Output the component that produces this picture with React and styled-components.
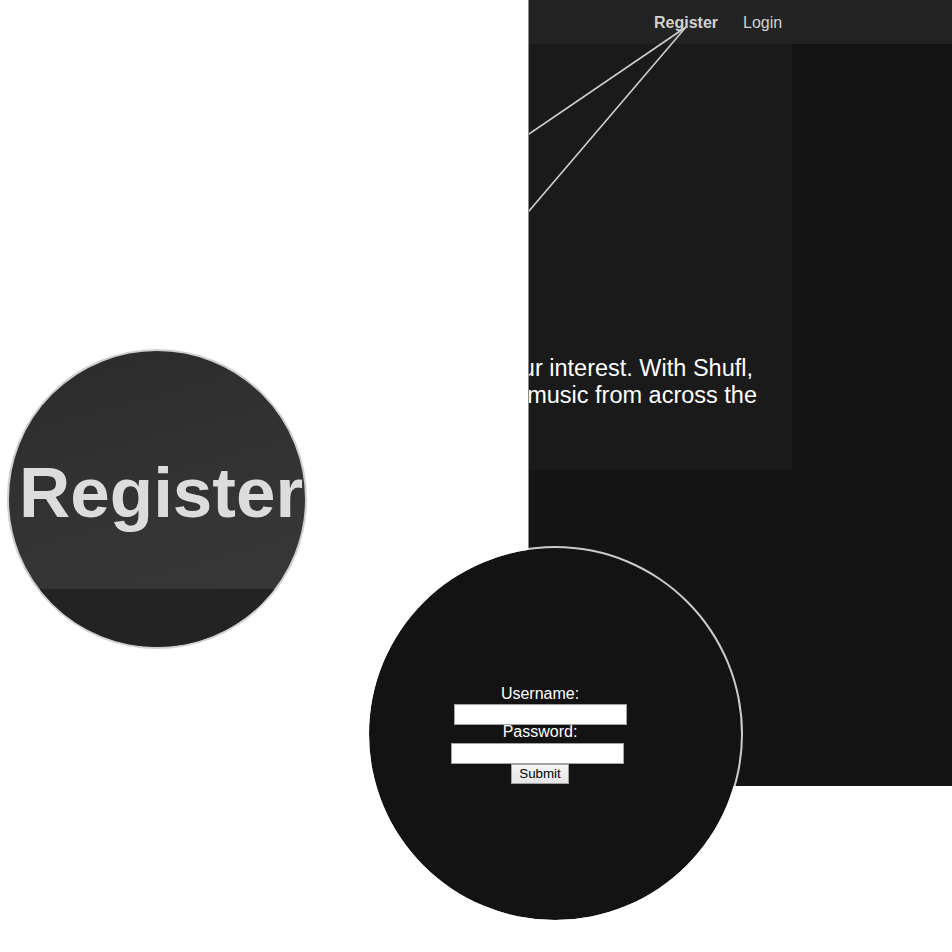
import React from "react";
import styled, { createGlobalStyle } from "styled-components";

const GlobalStyle = createGlobalStyle`
  html, body {
    margin: 0;
    padding: 0;
    background: #fff;
  }
  body {
    font-family: "Liberation Sans", Arial, sans-serif;
  }
`;

const Stage = styled.div`
  position: relative;
  width: 952px;
  height: 952px;
  overflow: hidden;
  background: #fff;
`;

const Page = styled.div`
  position: relative;
  margin-left: 528px;
  width: 424px;
  height: 786px;
  box-sizing: border-box;
  border-left: 1px solid #8a8a8a;
  background: #141414;
  overflow: hidden;
  display: flex;
  flex-direction: column;
`;

const NavBar = styled.nav`
  flex: none;
  height: 44px;
  box-sizing: border-box;
  padding: 2px 0 0 125px;
  background: #232323;
  display: flex;
  align-items: center;
  gap: 25px;
  font-size: 16px;
`;

const NavLink = styled.a`
  color: #d2d2d2;
  font-weight: ${props => (props.$active ? 700 : 400)};
  text-decoration: none;
  cursor: pointer;
`;

const Content = styled.div`
  flex: 1;
  display: flex;
  align-items: flex-start;
`;

const Panel = styled.section`
  width: 263px;
  height: 426px;
  box-sizing: border-box;
  background: #1a1a1a;
  padding: 0 35px 60px 0;
  display: flex;
  flex-direction: column;
  justify-content: flex-end;
`;

const Intro = styled.div`
  display: flex;
  flex-direction: column;
  align-items: flex-end;
  font-size: 23.5px;
  line-height: 27.6px;
  color: #fff;
`;

const IntroLine = styled.span`
  white-space: nowrap;
  margin-right: ${props => props.$trim || 0}px;
`;

const Pointer = styled.svg`
  position: absolute;
  inset: 0;
  width: 100%;
  height: 100%;
  pointer-events: none;
`;

const Lens = styled.div`
  position: absolute;
  left: 7px;
  top: 349px;
  width: 300px;
  height: 300px;
  box-sizing: border-box;
  border-radius: 50%;
  border: 2px solid #cfcfcf;
  overflow: hidden;
  background: linear-gradient(165deg, #2b2b2b 0%, #353535 60%, #383838 100%);
  display: flex;
  flex-direction: column;
`;

const LensText = styled.div`
  flex: 1;
  padding: 106px 0 0 10px;
  font-size: 71px;
  line-height: 71px;
  font-weight: 700;
  color: #dcdcdc;
  white-space: nowrap;
`;

const LensBar = styled.div`
  flex: none;
  height: 58px;
  background: #232323;
`;

const LoginDisc = styled.div`
  position: absolute;
  left: 367px;
  top: 546px;
  width: 376px;
  height: 376px;
  box-sizing: border-box;
  border-radius: 50%;
  border: 2px solid rgba(255, 255, 255, 0.78);
  background: #131313;
  background-clip: padding-box;
  display: flex;
  align-items: center;
  justify-content: center;
`;

const LoginForm = styled.form`
  display: flex;
  flex-direction: column;
  align-items: center;
  padding: 0 30px 0 0;
  margin: 0;
`;

const Label = styled.label`
  display: block;
  color: #fff;
  font-size: 16px;
  line-height: 18px;
  margin-top: ${props => props.$mt || 0}px;
`;

const Field = styled.input`
  width: 173px;
  height: 21px;
  box-sizing: border-box;
  border: 1px solid #a3a3a3;
  background: #fff;
  padding: 1px 2px;
  font-size: 13.33px;
  font-family: "Liberation Sans", Arial, sans-serif;
  outline: none;
  margin-top: ${props => props.$mt || 0}px;
  margin-left: ${props => (props.$shift > 0 ? props.$shift * 2 : 0)}px;
  margin-right: ${props => (props.$shift < 0 ? -props.$shift * 2 : 0)}px;
`;

const SubmitButton = styled.button`
  width: 58px;
  height: 20px;
  box-sizing: border-box;
  padding: 0;
  border: 1px solid #a0a0a0;
  background: linear-gradient(#f5f5f5, #e6e6e6);
  color: #000;
  font-size: 13.33px;
  font-family: "Liberation Sans", Arial, sans-serif;
  line-height: 18px;
`;

const App = () => {
  return (
    <Stage>
      <GlobalStyle />
      <Page>
        <NavBar>
          <NavLink $active>Register</NavLink>
          <NavLink>Login</NavLink>
        </NavBar>
        <Content>
          <Panel>
            <Intro>
              <IntroLine $trim={4}>
                Discover songs picked around your interest. With Shufl,
              </IntroLine>
              <IntroLine>you can listen to new music from across the</IntroLine>
            </Intro>
          </Panel>
        </Content>
        <Pointer viewBox="0 0 423 786">
          <line x1="157" y1="27" x2="-20" y2="147.6" stroke="#cfcfcf" strokeWidth="1.6" />
          <line x1="157" y1="27" x2="-20" y2="234.4" stroke="#cfcfcf" strokeWidth="1.6" />
        </Pointer>
      </Page>

      <Lens>
        <LensText>Register</LensText>
        <LensBar />
      </Lens>

      <LoginDisc>
        <LoginForm onSubmit={e => e.preventDefault()}>
          <Label htmlFor="username">Username:</Label>
          <Field id="username" type="text" $mt={1} $shift={0.5} />
          <Label htmlFor="password" $mt={-2}>Password:</Label>
          <Field id="password" type="password" $mt={2} $shift={-3} />
          <SubmitButton type="submit">Submit</SubmitButton>
        </LoginForm>
      </LoginDisc>
    </Stage>
  );
};

export default App;
